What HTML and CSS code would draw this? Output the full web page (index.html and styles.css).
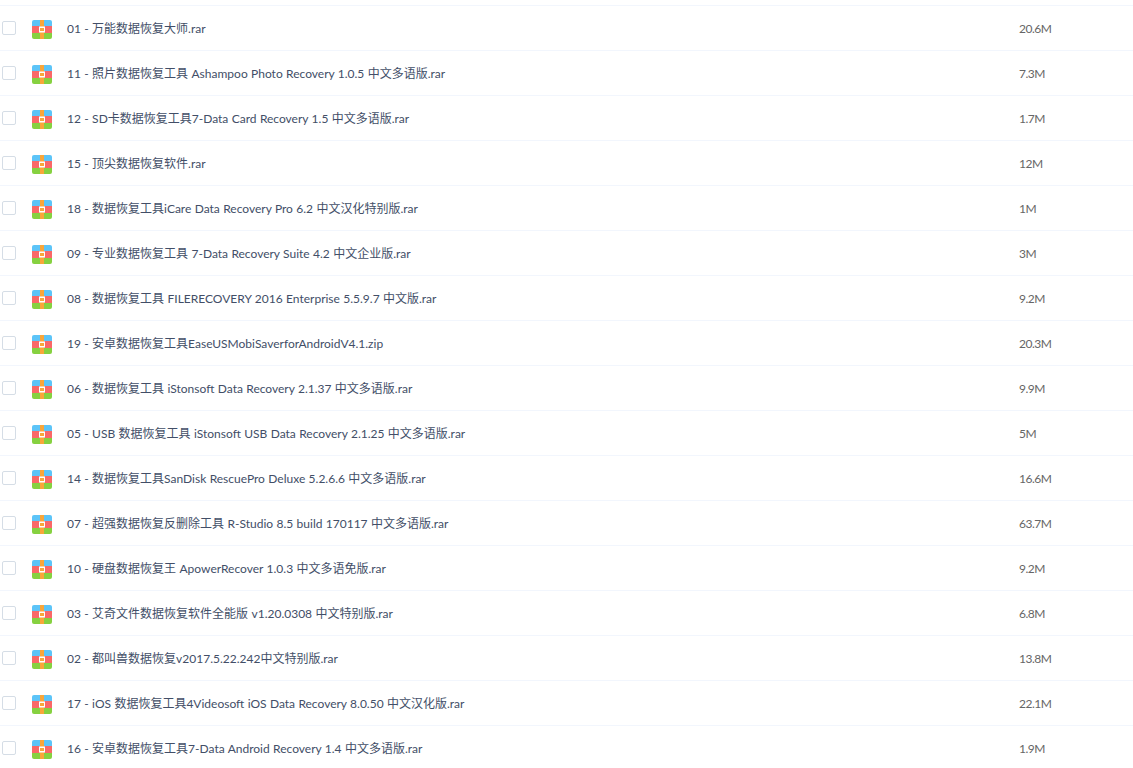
FILE: index.html
```html
<!DOCTYPE html>
<html lang="zh-CN">
<head>
<meta charset="utf-8">
<title>文件列表</title>
<link rel="stylesheet" href="styles.css">
</head>
<body>
<ul class="list">
<li class="row"><span class="check"></span><svg class="icon" viewBox="0 0 20 19"><use href="#rar"/></svg><span class="name">01 - 万能数据恢复大师.rar</span><span class="size">20.6M</span></li>
<li class="row"><span class="check"></span><svg class="icon" viewBox="0 0 20 19"><use href="#rar"/></svg><span class="name">11 - 照片数据恢复工具 Ashampoo Photo Recovery 1.0.5 中文多语版.rar</span><span class="size">7.3M</span></li>
<li class="row"><span class="check"></span><svg class="icon" viewBox="0 0 20 19"><use href="#rar"/></svg><span class="name">12 - SD卡数据恢复工具7-Data Card Recovery 1.5 中文多语版.rar</span><span class="size">1.7M</span></li>
<li class="row"><span class="check"></span><svg class="icon" viewBox="0 0 20 19"><use href="#rar"/></svg><span class="name">15 - 顶尖数据恢复软件.rar</span><span class="size">12M</span></li>
<li class="row"><span class="check"></span><svg class="icon" viewBox="0 0 20 19"><use href="#rar"/></svg><span class="name">18 - 数据恢复工具iCare Data Recovery Pro 6.2 中文汉化特别版.rar</span><span class="size">1M</span></li>
<li class="row"><span class="check"></span><svg class="icon" viewBox="0 0 20 19"><use href="#rar"/></svg><span class="name">09 - 专业数据恢复工具 7-Data Recovery Suite 4.2 中文企业版.rar</span><span class="size">3M</span></li>
<li class="row"><span class="check"></span><svg class="icon" viewBox="0 0 20 19"><use href="#rar"/></svg><span class="name">08 - 数据恢复工具 FILERECOVERY 2016 Enterprise 5.5.9.7 中文版.rar</span><span class="size">9.2M</span></li>
<li class="row"><span class="check"></span><svg class="icon" viewBox="0 0 20 19"><use href="#rar"/></svg><span class="name">19 - 安卓数据恢复工具EaseUSMobiSaverforAndroidV4.1.zip</span><span class="size">20.3M</span></li>
<li class="row"><span class="check"></span><svg class="icon" viewBox="0 0 20 19"><use href="#rar"/></svg><span class="name">06 - 数据恢复工具 iStonsoft Data Recovery 2.1.37 中文多语版.rar</span><span class="size">9.9M</span></li>
<li class="row"><span class="check"></span><svg class="icon" viewBox="0 0 20 19"><use href="#rar"/></svg><span class="name">05 - USB 数据恢复工具 iStonsoft USB Data Recovery 2.1.25 中文多语版.rar</span><span class="size">5M</span></li>
<li class="row"><span class="check"></span><svg class="icon" viewBox="0 0 20 19"><use href="#rar"/></svg><span class="name">14 - 数据恢复工具SanDisk RescuePro Deluxe 5.2.6.6 中文多语版.rar</span><span class="size">16.6M</span></li>
<li class="row"><span class="check"></span><svg class="icon" viewBox="0 0 20 19"><use href="#rar"/></svg><span class="name">07 - 超强数据恢复反删除工具 R-Studio 8.5 build 170117 中文多语版.rar</span><span class="size">63.7M</span></li>
<li class="row"><span class="check"></span><svg class="icon" viewBox="0 0 20 19"><use href="#rar"/></svg><span class="name">10 - 硬盘数据恢复王 ApowerRecover 1.0.3 中文多语免版.rar</span><span class="size">9.2M</span></li>
<li class="row"><span class="check"></span><svg class="icon" viewBox="0 0 20 19"><use href="#rar"/></svg><span class="name">03 - 艾奇文件数据恢复软件全能版 v1.20.0308 中文特别版.rar</span><span class="size">6.8M</span></li>
<li class="row"><span class="check"></span><svg class="icon" viewBox="0 0 20 19"><use href="#rar"/></svg><span class="name">02 - 都叫兽数据恢复v2017.5.22.242中文特别版.rar</span><span class="size">13.8M</span></li>
<li class="row"><span class="check"></span><svg class="icon" viewBox="0 0 20 19"><use href="#rar"/></svg><span class="name">17 - iOS 数据恢复工具4Videosoft iOS Data Recovery 8.0.50 中文汉化版.rar</span><span class="size">22.1M</span></li>
<li class="row"><span class="check"></span><svg class="icon" viewBox="0 0 20 19"><use href="#rar"/></svg><span class="name">16 - 安卓数据恢复工具7-Data Android Recovery 1.4 中文多语版.rar</span><span class="size">1.9M</span></li>
</ul>
<svg class="defs" width="0" height="0" aria-hidden="true">
<symbol id="rar" viewBox="0 0 20 19">
<path fill="#5cc4f8" d="M2 0h16a2 2 0 0 1 2 2v4H0V2a2 2 0 0 1 2-2z"/>
<rect fill="#f96868" y="6" width="20" height="7"/>
<path fill="#86d140" d="M0 13h20v4a2 2 0 0 1-2 2H2a2 2 0 0 1-2-2z"/>
<rect fill="#f9a63a" x="8" width="4" height="19"/>
<rect fill="#fff" x="7" y="6.5" width="6" height="6"/>
<rect fill="#f9a63a" x="8" y="8" width="4" height="3"/>
</symbol>
</svg>
</body>
</html>
```
FILE: styles.css
```css
html, body {
  margin: 0;
  padding: 0;
  background: #fff;
  overflow: hidden;
}
body {
  padding-top: 5px;
  font-family: Lato, "Noto Sans CJK SC", sans-serif;
  font-size: 12px;
  color: #666;
}
.list {
  list-style: none;
  margin: 0;
  padding: 0;
  border-top: 1px solid #f2f6fd;
}
.row {
  display: flex;
  align-items: center;
  height: 44px;
  border-bottom: 1px solid #f2f6fd;
}
.check {
  box-sizing: border-box;
  width: 14px;
  height: 14px;
  margin-left: 2px;
  border: 1px solid #d5dde6;
  border-radius: 2px;
  background: #fff;
}
.icon {
  width: 20px;
  height: 19px;
  margin-top: 3px;
  margin-left: 16px;
}
.name {
  margin-left: 15px;
  margin-top: -2px;
  width: 952px;
  white-space: nowrap;
  word-spacing: 0.3px;
  color: #424e67;
}
.size {
  letter-spacing: -0.5px;
  color: #666;
}
.defs {
  position: absolute;
}
```
